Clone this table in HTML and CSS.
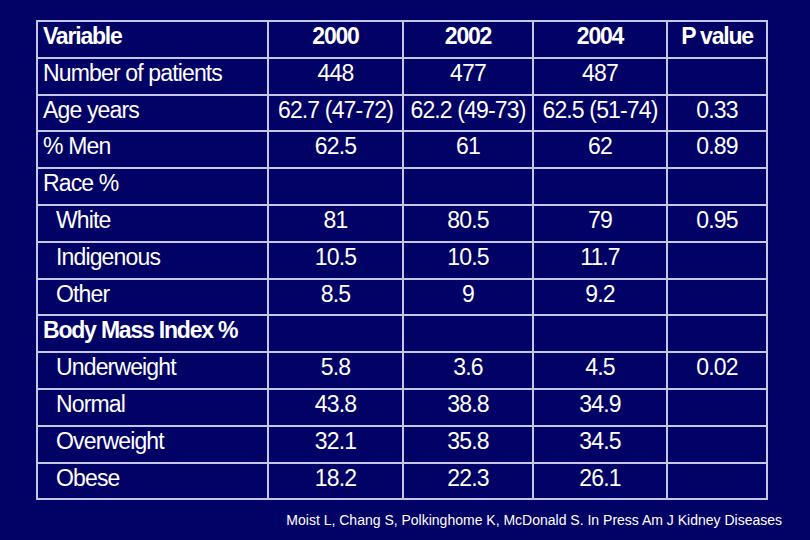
FILE: index.html
```html
<!DOCTYPE html>
<html>
<head>
<meta charset="utf-8">
<link rel="stylesheet" href="styles.css">
</head>
<body>
<div class="slide">
  <table class="data">
    <colgroup>
      <col class="c-var"><col class="c-y1"><col class="c-y2"><col class="c-y3"><col class="c-p">
    </colgroup>
    <tr class="head"><td class="label">Variable</td><td>2000</td><td>2002</td><td>2004</td><td>P value</td></tr>
    <tr><td class="label">Number of patients</td><td>448</td><td>477</td><td>487</td><td></td></tr>
    <tr><td class="label">Age years</td><td>62.7 (47-72)</td><td>62.2 (49-73)</td><td>62.5 (51-74)</td><td>0.33</td></tr>
    <tr><td class="label">% Men</td><td>62.5</td><td>61</td><td>62</td><td>0.89</td></tr>
    <tr><td class="label">Race %</td><td></td><td></td><td></td><td></td></tr>
    <tr><td class="label sub">White</td><td>81</td><td>80.5</td><td>79</td><td>0.95</td></tr>
    <tr><td class="label sub">Indigenous</td><td>10.5</td><td>10.5</td><td>11.7</td><td></td></tr>
    <tr><td class="label sub">Other</td><td>8.5</td><td>9</td><td>9.2</td><td></td></tr>
    <tr><td class="label strong">Body Mass Index %</td><td></td><td></td><td></td><td></td></tr>
    <tr><td class="label sub">Underweight</td><td>5.8</td><td>3.6</td><td>4.5</td><td>0.02</td></tr>
    <tr><td class="label sub">Normal</td><td>43.8</td><td>38.8</td><td>34.9</td><td></td></tr>
    <tr><td class="label sub">Overweight</td><td>32.1</td><td>35.8</td><td>34.5</td><td></td></tr>
    <tr><td class="label sub">Obese</td><td>18.2</td><td>22.3</td><td>26.1</td><td></td></tr>
  </table>
  <p class="cite">Moist L, Chang S, Polkinghome K, McDonald S. In Press Am J Kidney Diseases</p>
</div>
</body>
</html>
```
FILE: styles.css
```css
html, body {
  margin: 0;
  padding: 0;
  background: #020266;
}
body {
  width: 810px;
  height: 540px;
  overflow: hidden;
  font-family: "Liberation Sans", Arial, sans-serif;
  color: #ffffff;
}
.slide {
  padding: 20px 0 0 36px;
}
.data {
  border-collapse: collapse;
  table-layout: fixed;
  width: 732px;
  font-size: 23px;
  letter-spacing: -0.85px;
  line-height: 23px;
}
.c-var { width: 231px; }
.c-y1 { width: 135px; }
.c-y2 { width: 130px; }
.c-y3 { width: 134px; }
.c-p { width: 100px; }
.data tr {
  height: 36.8px;
}
.data td {
  border: 2px solid #c6c6e6;
  padding: 3px 0 0 0;
  vertical-align: top;
  text-align: center;
  white-space: nowrap;
  box-sizing: border-box;
}
.data td.label {
  text-align: left;
  padding-left: 5px;
}
.data td.sub {
  padding-left: 18px;
}
.head td, .data td.strong {
  font-weight: bold;
  letter-spacing: -1.2px;
}
.cite {
  margin: 12px 28px 0 0;
  text-align: right;
  font-size: 14px;
  line-height: 16px;
}
```
